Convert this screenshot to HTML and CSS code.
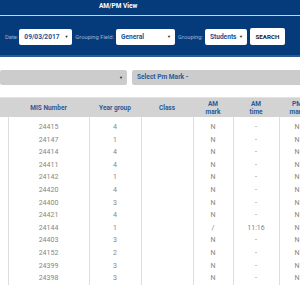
FILE: index.html
```html
<!DOCTYPE html>
<html lang="en">
<head>
    <meta charset="UTF-8">
    <title>AM/PM View</title>
    <link rel="stylesheet" href="styles.css">
</head>
<body>
    <div class="header">
        <div class="title">AM/PM View</div>
        <div class="controls">
            <label class="lbl">Date:</label>
            <div class="sel sel-date">09/03/2017<span class="arrow">▼</span></div>
            <label class="lbl">Grouping Field:</label>
            <div class="sel sel-field">General<span class="arrow">▼</span></div>
            <label class="lbl">Grouping:</label>
            <div class="sel sel-group">Students<span class="arrow">▼</span></div>
            <button class="search-btn">SEARCH</button>
        </div>
    </div>

    <div class="filters">
        <div class="filter filter-am"><span class="arrow">▼</span></div>
        <div class="filter filter-pm">Select Pm Mark -</div>
    </div>

    <table class="marks">
        <thead>
            <tr>
                <th class="c0"></th>
                <th class="c1">MIS Number</th>
                <th class="c2">Year group</th>
                <th class="c3">Class</th>
                <th class="c4">AM<br>mark</th>
                <th class="c5">AM<br>time</th>
                <th class="c6">PM<br>mark</th>
            </tr>
        </thead>
        <tbody>
            <tr class="first"><td></td><td>24415</td><td>4</td><td></td><td>N</td><td>-</td><td>N</td></tr>
            <tr><td></td><td>24147</td><td>1</td><td></td><td>N</td><td>-</td><td>N</td></tr>
            <tr><td></td><td>24414</td><td>4</td><td></td><td>N</td><td>-</td><td>N</td></tr>
            <tr><td></td><td>24411</td><td>4</td><td></td><td>N</td><td>-</td><td>N</td></tr>
            <tr><td></td><td>24142</td><td>1</td><td></td><td>N</td><td>-</td><td>N</td></tr>
            <tr><td></td><td>24420</td><td>4</td><td></td><td>N</td><td>-</td><td>N</td></tr>
            <tr><td></td><td>24400</td><td>3</td><td></td><td>N</td><td>-</td><td>N</td></tr>
            <tr><td></td><td>24421</td><td>4</td><td></td><td>N</td><td>-</td><td>N</td></tr>
            <tr><td></td><td>24144</td><td>1</td><td></td><td>/</td><td>11:16</td><td>N</td></tr>
            <tr><td></td><td>24403</td><td>3</td><td></td><td>N</td><td>-</td><td>N</td></tr>
            <tr><td></td><td>24152</td><td>2</td><td></td><td>N</td><td>-</td><td>N</td></tr>
            <tr><td></td><td>24399</td><td>3</td><td></td><td>N</td><td>-</td><td>N</td></tr>
            <tr><td></td><td>24398</td><td>3</td><td></td><td>N</td><td>-</td><td>N</td></tr>
        </tbody>
    </table>
</body>
</html>
```

FILE: styles.css
```css
body {
    margin: 0;
    width: 300px;
    overflow: hidden;
    background: #ffffff;
    font-family: Roboto, "Liberation Sans", sans-serif;
}

/* Top blue bar */
.header {
    background: #053b7b;
    height: 55px;
    border-bottom: 2px solid #2a5a93;
}

.title {
    height: 15px;
    line-height: 13px;
    padding-left: 99px;
    color: #ffffff;
    font-size: 6.5px;
    font-weight: bold;
    border-bottom: 1px solid #c8d4e6;
}

.controls {
    display: flex;
    align-items: center;
    padding: 12px 0 0 5px;
}

.lbl {
    color: #9db3d6;
    font-size: 5.8px;
    margin-right: 1px;
}

.sel {
    position: relative;
    box-sizing: border-box;
    height: 16px;
    line-height: 16px;
    background: #ffffff;
    border-radius: 2px;
    color: #1f4f8e;
    font-size: 6.6px;
    font-weight: bold;
    padding-left: 5px;
    margin-right: 3px;
}

.sel .arrow,
.filter .arrow {
    position: absolute;
    right: 4px;
    top: 0;
    color: #222222;
    font-size: 4px;
}

.sel-date {
    width: 53px;
    margin-right: 3px;
}

.sel-field {
    width: 59px;
    margin-left: 1px;
}

.sel-group {
    width: 42px;
    margin-left: 1px;
}

.search-btn {
    box-sizing: border-box;
    height: 17px;
    width: 35px;
    padding: 0;
    border: none;
    border-radius: 2px;
    background: #ffffff;
    color: #222222;
    font-family: Roboto, "Liberation Sans", sans-serif;
    font-size: 6.2px;
    font-weight: bold;
}

/* Filter selects */
.filters {
    display: flex;
    gap: 5px;
    padding-top: 13px;
}

.filter {
    position: relative;
    height: 15px;
    line-height: 15px;
    background: #cccccc;
    border-radius: 2px;
    color: #2a5a98;
    font-size: 6.6px;
    font-weight: bold;
}

.filter-am {
    width: 127px;
}

.filter-pm {
    flex: 1;
    padding-left: 5px;
    margin-right: -4px;
}

/* Table */
.marks {
    margin-top: 12px;
    border-collapse: collapse;
    table-layout: fixed;
    width: 315px;
}

.marks th {
    background: #d3d3d3;
    border-top: 1px solid #e2e2e2;
    height: 19px;
    padding: 0;
    color: #2a5a98;
    font-size: 6.5px;
    font-weight: bold;
    line-height: 8px;
    text-align: center;
}

.marks td {
    border-left: 1px solid #dddddd;
    border-right: 1px solid #dddddd;
    padding: 0;
    color: #858585;
    font-size: 7px;
    line-height: 12.6px;
    text-align: center;
}

.marks tr.first td {
    padding-top: 4px;
}

.marks td:first-child {
    border-left: none;
}

.c0 { width: 8px; }
.c1 { width: 81px; }
.c2 { width: 52px; }
.c3 { width: 52px; }
.c4 { width: 40px; }
.c5 { width: 46px; }
.c6 { width: 36px; }
```
